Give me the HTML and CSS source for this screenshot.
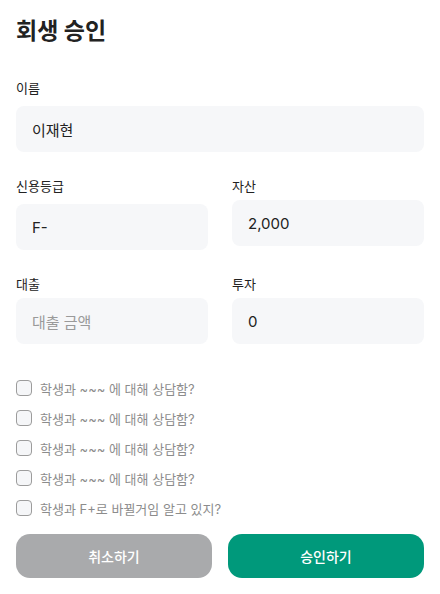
FILE: index.html
```html
<!DOCTYPE html>
<html lang="ko">
<head>
<meta charset="utf-8">
<link rel="stylesheet" href="styles.css">
</head>
<body>
<div class="page">
  <h1 class="title">회생 승인</h1>
  <div class="field field-name">
    <label class="label">이름</label>
    <div class="input">이재현</div>
  </div>
  <div class="grid">
    <div class="field">
      <label class="label label-grade">신용등급</label>
      <div class="input">F-</div>
    </div>
    <div class="field">
      <label class="label label-tight">자산</label>
      <div class="input">2,000</div>
    </div>
    <div class="field">
      <label class="label label-tight">대출</label>
      <div class="input placeholder">대출 금액</div>
    </div>
    <div class="field">
      <label class="label label-tight">투자</label>
      <div class="input">0</div>
    </div>
  </div>
  <ul class="checks">
    <li class="check"><span class="box"></span><span>학생과 ~~~ 에 대해 상담함?</span></li>
    <li class="check"><span class="box"></span><span>학생과 ~~~ 에 대해 상담함?</span></li>
    <li class="check"><span class="box"></span><span>학생과 ~~~ 에 대해 상담함?</span></li>
    <li class="check"><span class="box"></span><span>학생과 ~~~ 에 대해 상담함?</span></li>
    <li class="check"><span class="box"></span><span>학생과 F+로 바뀔거임 알고 있지?</span></li>
  </ul>
  <div class="actions">
    <button class="btn btn-cancel">취소하기</button>
    <button class="btn btn-ok">승인하기</button>
  </div>
</div>
</body>
</html>
```

FILE: styles.css
```css
* { box-sizing: border-box; }
html, body { margin: 0; padding: 0; background: #fff; }
body {
  font-family: "Inter", "Noto Sans CJK KR", sans-serif;
  color: #1f1f1f;
}
.page {
  padding: 15px 16px 16px;
}
.title {
  margin: 0;
  font-size: 23px;
  line-height: 32px;
  font-weight: 700;
  color: #222;
}
.field-name { margin-top: 31px; }
.label {
  display: block;
  font-size: 13px;
  line-height: 20px;
  color: #222;
  margin-bottom: 8px;
}
.input {
  height: 46px;
  background: #f6f7f9;
  border-radius: 8px;
  padding: 0 16px;
  display: flex;
  align-items: center;
  font-size: 15px;
  color: #222;
}
.placeholder { color: #9a9a9a; }
.grid {
  display: grid;
  grid-template-columns: 1fr 1fr;
  column-gap: 24px;
  row-gap: 24px;
  margin-top: 24px;
}
.label-grade { margin-bottom: 8px; }
.label-tight { margin-bottom: 4px; }
.checks {
  list-style: none;
  margin: 36px 0 0;
  padding: 0;
  display: flex;
  flex-direction: column;
  gap: 14px;
}
.check {
  display: flex;
  align-items: center;
  gap: 8px;
  height: 16px;
  font-size: 13px;
  color: #8c8c8c;
}
.box {
  width: 16px;
  height: 16px;
  border: 1px solid #9c9c9c;
  border-radius: 4px;
  background: #f5f6f8;
  flex: none;
}
.actions {
  display: flex;
  gap: 16px;
  margin-top: 18px;
}
.btn {
  flex: 1;
  height: 44px;
  border: none;
  border-radius: 14px;
  font-family: inherit;
  font-size: 14px;
  font-weight: 500;
  color: #fff;
}
.btn-cancel { background: #a9aaac; }
.btn-ok { background: #00997b; }
```
